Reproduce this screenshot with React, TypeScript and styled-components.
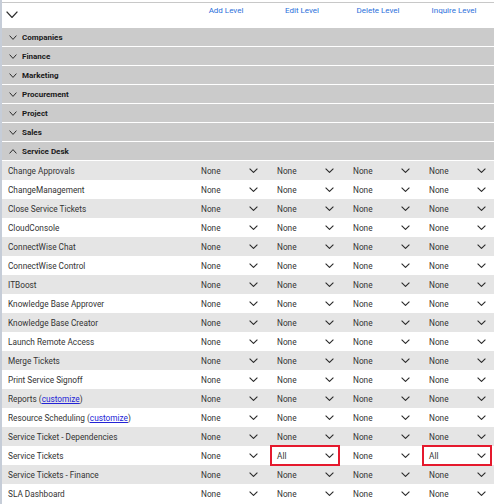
import React from "react";
import styled, { createGlobalStyle } from "styled-components";

const GlobalStyle = createGlobalStyle`
  html, body { margin: 0; padding: 0; background: #fff; }
  body { font-family: Roboto, "Liberation Sans", sans-serif; }
`;

const Page = styled.div`
  border-left: 2px solid #c6cdd8;
  padding-top: 2px;
  min-height: 502px;
  overflow: hidden;
`;

const Table = styled.div`
  border-top: 1px solid #c8c8c8;
`;

const GRID = "194px repeat(3, 76px) 1fr";

const HeaderRow = styled.div`
  display: grid;
  grid-template-columns: ${GRID};
  height: 25px;
  background: #fff;
`;

const HeaderToggle = styled.div`
  padding: 8px 0 0 4px;
`;

const ColLabel = styled.div`
  width: 60px;
  text-align: center;
  padding-top: 3px;
  font-size: 8px;
  color: #2a6fdb;
  white-space: nowrap;
`;

const GroupRow = styled.div`
  display: flex;
  align-items: center;
  gap: 5px;
  height: 18px;
  padding-left: 7px;
  background: #cbcbcb;
  border-bottom: 1px solid #fff;
  font-size: 8px;
  font-weight: 700;
  color: #1a1a1a;
`;

const DataRow = styled.div<{ $alt: boolean }>`
  display: grid;
  grid-template-columns: ${GRID};
  align-items: center;
  height: 19px;
  background: ${(p) => (p.$alt ? "#e5e5e5" : "#fff")};
`;

const RowLabel = styled.div`
  padding-left: 6px;
  font-size: 8.25px;
  color: #333;
  white-space: nowrap;
`;

const Link = styled.a`
  color: #2323d6;
  text-decoration: underline;
`;

const Select = styled.div<{ $flagged: boolean }>`
  display: flex;
  align-items: center;
  justify-content: space-between;
  width: 66px;
  height: 17px;
  box-sizing: border-box;
  padding: 0 4px 0 5px;
  font-size: 8.25px;
  color: #333;
  outline: ${(p) => (p.$flagged ? "2px solid #e5192d" : "none")};
  background: ${(p) => (p.$flagged ? "#fff" : "transparent")};
`;

const Chevron = ({ w, h, up, sw = 1.2 }: { w: number; h: number; up?: boolean; sw?: number }) => (
  <svg width={w} height={h} viewBox={`0 0 ${w} ${h}`} style={{ display: "block" }}>
    <polyline
      points={
        up
          ? `0.6,${h - 0.6} ${w / 2},0.6 ${w - 0.6},${h - 0.6}`
          : `0.6,0.6 ${w / 2},${h - 0.6} ${w - 0.6},0.6`
      }
      fill="none"
      stroke="#2b2b2b"
      strokeWidth={sw}
    />
  </svg>
);

const groups = ["Companies", "Finance", "Marketing", "Procurement", "Project", "Sales"];

type Row = { label: React.ReactNode; values: string[] };
const N = ["None", "None", "None", "None"];

const rows: Row[] = [
  { label: "Change Approvals", values: N },
  { label: "ChangeManagement", values: N },
  { label: "Close Service Tickets", values: N },
  { label: "CloudConsole", values: N },
  { label: "ConnectWise Chat", values: N },
  { label: "ConnectWise Control", values: N },
  { label: "ITBoost", values: N },
  { label: "Knowledge Base Approver", values: N },
  { label: "Knowledge Base Creator", values: N },
  { label: "Launch Remote Access", values: N },
  { label: "Merge Tickets", values: N },
  { label: "Print Service Signoff", values: N },
  { label: <>Reports (<Link>customize</Link>)</>, values: N },
  { label: <>Resource Scheduling (<Link>customize</Link>)</>, values: N },
  { label: "Service Ticket - Dependencies", values: N },
  { label: "Service Tickets", values: ["None", "All", "None", "All"] },
  { label: "Service Tickets - Finance", values: N },
  { label: "SLA Dashboard", values: N },
];

export default function App() {
  return (
    <>
      <GlobalStyle />
      <Page>
        <Table>
          <HeaderRow>
            <HeaderToggle>
              <Chevron w={12} h={7} sw={1.3} />
            </HeaderToggle>
            <ColLabel>Add Level</ColLabel>
            <ColLabel>Edit Level</ColLabel>
            <ColLabel>Delete Level</ColLabel>
            <ColLabel>Inquire Level</ColLabel>
          </HeaderRow>
          {groups.map((g) => (
            <GroupRow key={g}>
              <Chevron w={8} h={5} sw={1} />
              {g}
            </GroupRow>
          ))}
          <GroupRow>
            <Chevron w={8} h={5} sw={1} up />
            Service Desk
          </GroupRow>
          {rows.map((r, i) => (
            <DataRow key={i} $alt={i % 2 === 0}>
              <RowLabel>{r.label}</RowLabel>
              {r.values.map((v, j) => (
                <Select key={j} $flagged={v === "All"}>
                  <span>{v}</span>
                  <Chevron w={9} h={5} sw={1.1} />
                </Select>
              ))}
            </DataRow>
          ))}
        </Table>
      </Page>
    </>
  );
}
